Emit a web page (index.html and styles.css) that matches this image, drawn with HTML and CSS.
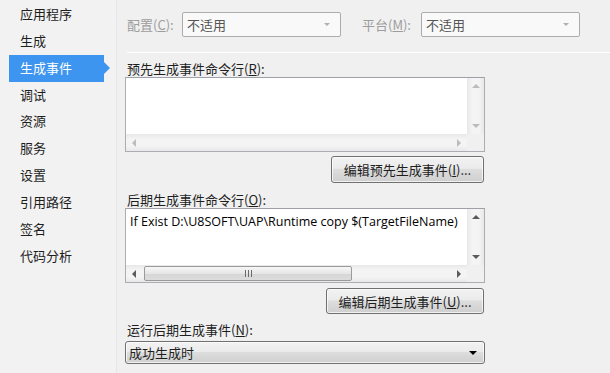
FILE: index.html
```html
<!DOCTYPE html>
<html>
<head>
<meta charset="utf-8">
<link rel="stylesheet" href="styles.css">
</head>
<body>
<div class="page">
  <nav class="sidebar">
    <div class="item">应用程序</div>
    <div class="item">生成</div>
    <div class="item active">生成事件</div>
    <div class="item">调试</div>
    <div class="item">资源</div>
    <div class="item">服务</div>
    <div class="item">设置</div>
    <div class="item">引用路径</div>
    <div class="item">签名</div>
    <div class="item">代码分析</div>
  </nav>
  <main class="content">
    <div class="toprow">
      <span class="dlabel">配置(<u>C</u>):</span>
      <div class="combo"><span>不适用</span><span class="carrow"></span></div>
      <span class="dlabel plat">平台(<u>M</u>):</span>
      <div class="combo"><span>不适用</span><span class="carrow"></span></div>
    </div>
    <div class="sep"></div>

    <div class="label">预先生成事件命令行(<u>R</u>):</div>
    <div class="textbox">
      <div class="tb-main">
        <div class="tb-text"></div>
        <div class="vscroll">
          <span class="arr up dis"></span>
          <span class="arr down dis"></span>
        </div>
      </div>
      <div class="hrow">
        <div class="hscroll">
          <span class="arr left dis"></span>
          <span class="arr right dis"></span>
        </div>
        <div class="corner"></div>
      </div>
    </div>
    <div class="btnrow b1"><button class="btn w1">编辑预先生成事件(<u>I</u>)...</button></div>

    <div class="label l2">后期生成事件命令行(<u>O</u>):</div>
    <div class="textbox">
      <div class="tb-main">
        <div class="tb-text code">If Exist D:\U8SOFT\UAP\Runtime copy $(TargetFileName)</div>
        <div class="vscroll">
          <span class="arr up"></span>
          <span class="arr down"></span>
        </div>
      </div>
      <div class="hrow">
        <div class="hscroll">
          <span class="arr left"></span>
          <div class="thumb"><span class="grip"></span></div>
          <span class="arr right"></span>
        </div>
        <div class="corner"></div>
      </div>
    </div>
    <div class="btnrow b2"><button class="btn w2">编辑后期生成事件(<u>U</u>)...</button></div>

    <div class="label l3">运行后期生成事件(<u>N</u>):</div>
    <div class="select"><span>成功生成时</span><span class="sarrow"></span></div>
  </main>
</div>
</body>
</html>
```

FILE: styles.css
```css
* { box-sizing: border-box; }
html, body {
  margin: 0;
  padding: 0;
  background: #f0f0f0;
  width: 610px;
  height: 373px;
  overflow: hidden;
  font-family: "Noto Sans CJK SC", "Noto Sans", sans-serif;
  font-size: 13px;
  color: #1e1e1e;
}
u { text-decoration: underline; text-underline-offset: 1px; }
.page {
  display: flex;
  height: 373px;
}
.sidebar {
  width: 117px;
  flex: none;
  padding-top: 1px;
  background: #f2f2f2;
  border-right: 1px solid #e6e6e6;
}
.item {
  height: 26.85px;
  line-height: 26px;
  padding-left: 20px;
  color: #1e1e1e;
  position: relative;
}
.item.active {
  margin-left: 9px;
  margin-right: 12px;
  padding-left: 11px;
  background: #3d95f0;
  color: #fff;
}
.item.active::after {
  content: "";
  position: absolute;
  right: -6px;
  top: 7px;
  border-left: 6px solid #3d95f0;
  border-top: 6px solid transparent;
  border-bottom: 6px solid transparent;
}
.content {
  flex: 1;
  padding-left: 8px;
  padding-top: 12px;
}
.toprow {
  display: flex;
  align-items: center;
  height: 25px;
  padding-left: 2px;
}
.dlabel {
  color: #9d9d9d;
  width: 55px;
}
.dlabel.plat {
  margin-left: 21px;
  width: 59px;
}
.combo {
  width: 159px;
  height: 25px;
  border: 1px solid #acacac;
  border-radius: 2px;
  background: #f9f9f9;
  display: flex;
  align-items: center;
  justify-content: space-between;
  padding: 0 6px 0 4px;
  color: #555;
}
.carrow {
  width: 0; height: 0;
  border-left: 3px solid transparent;
  border-right: 3px solid transparent;
  border-top: 3px solid #b0b0b0;
  margin-right: 4px;
}
.sep {
  margin-top: 15px;
  margin-left: 2px;
  height: 1px;
  background: #a8a8a8;
  border-bottom: 1px solid #fff;
}
.label {
  height: 16px;
  line-height: 16px;
  margin-top: 8px;
  padding-left: 2px;
}
.label.l2 { margin-top: 9px; }
.label.l3 { margin-top: 8px; }
.textbox {
  width: 360px;
  height: 75px;
  border: 1px solid #abadb3;
  border-top-color: #9da0a8;
  background: #fff;
  display: flex;
  flex-direction: column;
}
.tb-main {
  flex: 1;
  display: flex;
}
.tb-text {
  flex: 1;
  padding: 3px 4px;
}
.tb-text.code {
  font-family: "Open Sans", "Noto Sans", sans-serif;
  font-size: 12.5px;
  color: #000;
  white-space: nowrap;
  overflow: hidden;
  padding-top: 4px;
}
.vscroll {
  width: 17px;
  background: linear-gradient(to right, #e8e8e8, #f4f4f4 30%, #f4f4f4 70%, #e8e8e8);
  position: relative;
  display: flex;
  flex-direction: column;
  justify-content: space-between;
  align-items: center;
  padding: 6px 0 6px;
}
.hrow {
  height: 17px;
  display: flex;
}
.hscroll {
  flex: 1;
  background: linear-gradient(#e8e8e8, #f4f4f4 30%, #f4f4f4 70%, #e8e8e8);
  display: flex;
  align-items: center;
  padding: 0 6px;
  justify-content: space-between;
}
.corner {
  width: 17px;
  background: #f0f0f0;
}
.arr { width: 0; height: 0; display: block; }
.arr.up { border-left: 4px solid transparent; border-right: 4px solid transparent; border-bottom: 4px solid #5b5b5b; }
.arr.down { border-left: 4px solid transparent; border-right: 4px solid transparent; border-top: 4px solid #5b5b5b; }
.arr.left { border-top: 4px solid transparent; border-bottom: 4px solid transparent; border-right: 4px solid #5b5b5b; }
.arr.right { border-top: 4px solid transparent; border-bottom: 4px solid transparent; border-left: 4px solid #5b5b5b; }
.arr.up.dis { border-bottom-color: #bcbcbc; }
.arr.down.dis { border-top-color: #bcbcbc; }
.arr.left.dis { border-right-color: #bcbcbc; }
.arr.right.dis { border-left-color: #bcbcbc; }
.thumb {
  width: 208px;
  height: 15px;
  margin-left: 8px;
  margin-right: auto;
  border: 1px solid #9a9a9a;
  border-radius: 2px;
  background: linear-gradient(#f6f6f6, #e6e6e6 50%, #d6d6d6 51%, #dcdcdc);
  display: flex;
  align-items: center;
  justify-content: center;
}
.grip {
  width: 7px;
  height: 7px;
  background: repeating-linear-gradient(to right, #6a6a6a 0 1px, transparent 1px 3px);
}
.btnrow {
  width: 360px;
  display: flex;
  justify-content: flex-end;
  padding-right: 1px;
}
.btnrow.b1 { margin-top: 4px; }
.btnrow.b2 { margin-top: 5px; }
.btn {
  height: 27px;
  border: 1px solid #707070;
  border-radius: 3px;
  background: linear-gradient(#f2f2f2, #ebebeb 45%, #dddddd 50%, #cfcfcf);
  font-family: "Noto Sans CJK SC", "Noto Sans", sans-serif;
  font-size: 13px;
  color: #1e1e1e;
  padding: 0;
  box-shadow: inset 0 0 0 1px rgba(255,255,255,0.7);
}
.btn.w1 { width: 153px; }
.btn.w2 { width: 158px; height: 26px; }
.select {
  margin-top: 3px;
  width: 360px;
  height: 23px;
  border: 1px solid #707070;
  border-radius: 3px;
  background: linear-gradient(#f2f2f2, #ebebeb 45%, #dddddd 50%, #cfcfcf);
  display: flex;
  align-items: center;
  justify-content: space-between;
  padding: 0 7px 0 3px;
  box-shadow: inset 0 0 0 1px rgba(255,255,255,0.7);
}
.sarrow {
  width: 0; height: 0;
  border-left: 4px solid transparent;
  border-right: 4px solid transparent;
  border-top: 4px solid #000;
}
```
